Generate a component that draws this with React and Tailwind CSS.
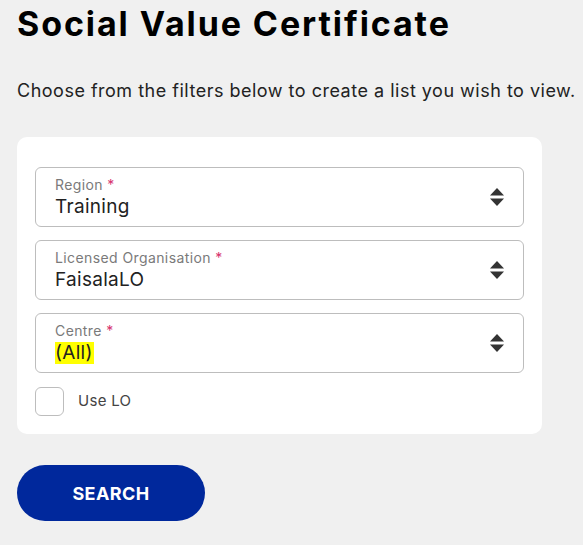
import { useState } from 'react'

function SortIcon() {
  return (
    <svg width="16" height="20" viewBox="0 0 16 20" className="text-[#333]">
      <path d="M8 1 L15 8.5 L1 8.5 Z" fill="currentColor" />
      <path d="M1 11.5 L15 11.5 L8 19 Z" fill="currentColor" />
    </svg>
  )
}

function SelectField({ label, value, highlight }) {
  return (
    <div className="flex h-[60px] items-center rounded-[6px] border border-[#bdbdbd] bg-white pl-[19px] pr-[18px]">
      <div className="flex flex-1 flex-col">
        <span className="text-[14px] leading-[18px] tracking-[0.4px] text-[#7a7a7a]">
          {label} <span className="text-[#d6336c]">*</span>
        </span>
        <span className="mt-[2px] text-[19px] leading-[22px] tracking-[0.3px] text-[#222]">
          {highlight ? <span className="inline-block bg-[#ffff00] pr-[1px]">{value}</span> : value}
        </span>
      </div>
      <SortIcon />
    </div>
  )
}

export default function App() {
  const [useLo, setUseLo] = useState(false)

  return (
    <div className="min-h-[545px] bg-[#f0f0f0] px-[17px] pt-[4px] font-['Inter',sans-serif]">
      <h1 className="text-[34px] font-bold leading-[40px] tracking-[1.9px] text-black">Social Value Certificate</h1>
      <p className="mt-[35px] whitespace-nowrap text-[18px] leading-[24px] tracking-[0.5px] text-[#222]">
        Choose from the filters below to create a list you wish to view.
      </p>

      <div className="mt-[34px] w-[525px] rounded-[10px] bg-white px-[18px] pb-[18px] pt-[30px]">
        <div className="flex flex-col gap-[13px]">
          <SelectField label="Region" value="Training" />
          <SelectField label="Licensed Organisation" value="FaisalaLO" />
          <SelectField label="Centre" value="(All)" highlight />
        </div>

        <label className="mt-[14px] flex items-center gap-[14px]">
          <button
            type="button"
            onClick={() => setUseLo(!useLo)}
            className="h-[29px] w-[29px] rounded-[6px] border border-[#bdbdbd] bg-white"
          />
          <span className="text-[15px] tracking-[0.3px] text-[#444]">Use LO</span>
        </label>
      </div>

      <button className="mt-[31px] h-[56px] w-[188px] rounded-full bg-[#00289c] text-[18px] font-bold tracking-[0.4px] text-white">
        SEARCH
      </button>
    </div>
  )
}
